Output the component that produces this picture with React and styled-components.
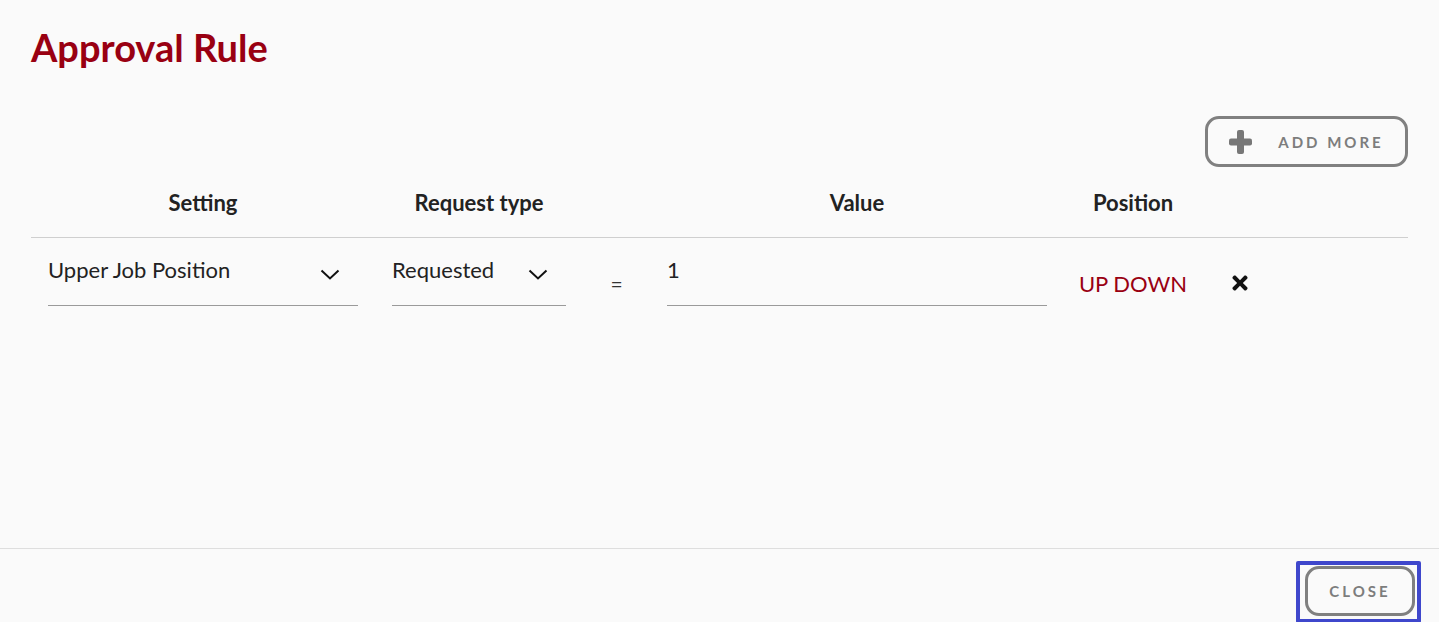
import React from 'react';
import styled, { createGlobalStyle } from 'styled-components';
import { FaTimes } from 'react-icons/fa';

const GlobalStyle = createGlobalStyle`
  body {
    margin: 0;
    background: #ffffff;
    font-family: Lato, "Open Sans", sans-serif;
  }
`;

const Modal = styled.div`
  height: 622px;
  background: #fafafa;
  display: flex;
  flex-direction: column;
`;

const Body = styled.div`
  flex: 1;
  padding: 23px 31px 0;
`;

const Title = styled.h1`
  margin: 0;
  font-size: 38px;
  line-height: 48px;
  font-weight: 700;
  color: #990012;
`;

const Toolbar = styled.div`
  display: flex;
  justify-content: flex-end;
  margin-top: 45px;
`;

const OutlineButton = styled.button`
  display: flex;
  align-items: center;
  justify-content: center;
  gap: 26px;
  height: ${p => p.height || 51}px;
  width: ${p => p.width}px;
  background: transparent;
  border: 3px solid #808080;
  border-radius: 14px;
  color: #7d7d7d;
  font-family: Lato, sans-serif;
  font-weight: 700;
  font-size: 15px;
  letter-spacing: 3px;
  cursor: pointer;
`;

const FocusRing = styled.span`
  display: inline-flex;
  border: 4px solid #3f47cc;
  border-radius: 2px;
  padding: 1px 2px 3px 5px;
  margin-bottom: -2px;
`;

const Grid = styled.div`
  display: grid;
  grid-template-columns: 344px 208px 67px 414px 138px 1fr;
`;

const HeadRow = styled(Grid)`
  height: 70px;
  align-items: center;
  border-bottom: 1px solid #cfcfcf;
`;

const HeadCell = styled.div`
  text-align: center;
  font-size: 22px;
  font-weight: 700;
  color: #222;
`;

const Row = styled(Grid)`
  height: 90px;
  align-items: center;
`;

const Cell = styled.div`
  padding: 0 ${p => p.pad ?? 17}px;
  text-align: ${p => p.align || 'left'};
  white-space: nowrap;
`;

const Field = styled.div`
  align-self: start;
  margin: 16px 17px 0;
  height: 52px;
  box-sizing: border-box;
  border-bottom: 1px solid #9a9a9a;
  display: flex;
  align-items: flex-start;
  justify-content: space-between;
  padding-top: 3px;
  font-size: 22px;
  line-height: 26px;
  color: #222;
`;

const Chevron = styled.span`
  display: flex;
  margin: 12px 18px 0 0;
`;

const Equals = styled.span`
  font-size: 21px;
  color: #333;
`;

const PositionText = styled.span`
  font-size: 22px;
  color: #990012;
`;

const IconButton = styled.button`
  background: none;
  border: none;
  padding: 0 0 0 14px;
  display: flex;
  color: #111;
  cursor: pointer;
`;

const Footer = styled.div`
  box-sizing: border-box;
  height: 74px;
  border-top: 1px solid #dedede;
  display: flex;
  justify-content: flex-end;
  align-items: flex-start;
  padding: 12px 18px 0 0;
`;

const ChevronIcon = () => (
  <svg width="20" height="11" viewBox="0 0 20 11" fill="none">
    <path d="M1.5 1.5l8.5 8 8.5-8" stroke="#111" strokeWidth="2" />
  </svg>
);

const PlusIcon = () => (
  <svg width="23" height="24" viewBox="0 0 23 24">
    <rect x="8" y="0" width="7" height="24" rx="2" fill="#777" />
    <rect x="0" y="8.5" width="23" height="7" rx="2" fill="#777" />
  </svg>
);

export default function App() {
  return (
    <>
      <GlobalStyle />
      <Modal>
        <Body>
          <Title>Approval Rule</Title>
          <Toolbar>
            <OutlineButton width={203}>
              <PlusIcon />
              ADD MORE
            </OutlineButton>
          </Toolbar>
          <HeadRow>
            <HeadCell>Setting</HeadCell>
            <HeadCell>Request type</HeadCell>
            <HeadCell />
            <HeadCell>Value</HeadCell>
            <HeadCell>Position</HeadCell>
            <HeadCell />
          </HeadRow>
          <Row>
            <Field>
              Upper Job Position
              <Chevron><ChevronIcon /></Chevron>
            </Field>
            <Field>
              Requested
              <Chevron><ChevronIcon /></Chevron>
            </Field>
            <Cell align="center"><Equals>=</Equals></Cell>
            <Field>1</Field>
            <Cell align="center" pad={0}><PositionText>UP DOWN</PositionText></Cell>
            <Cell pad={13}>
              <IconButton><FaTimes size={22} /></IconButton>
            </Cell>
          </Row>
        </Body>
        <Footer>
          <FocusRing>
            <OutlineButton width={110} height={50}>CLOSE</OutlineButton>
          </FocusRing>
        </Footer>
      </Modal>
    </>
  );
}
